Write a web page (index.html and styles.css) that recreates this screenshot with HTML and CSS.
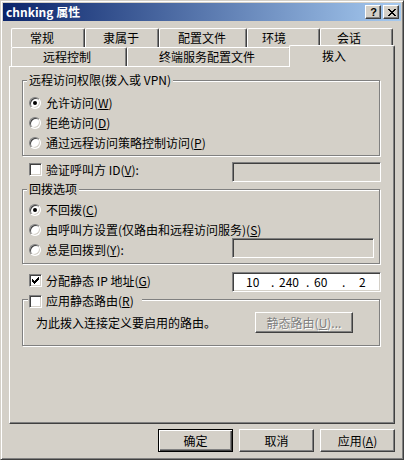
FILE: index.html
```html
<!DOCTYPE html>
<html lang="zh-CN">
<head>
<meta charset="utf-8">
<title>chnking 属性</title>
<link rel="stylesheet" href="styles.css">
</head>
<body>
<div class="window">
  <div class="titlebar">
    <span class="title">chnking 属性</span>
    <div class="tbtns">
      <span class="tbtn help">?</span>
      <span class="tbtn close">
        <svg width="8" height="7" viewBox="0 0 8 7" shape-rendering="crispEdges"><path d="M0 0h2v1h-2z M6 0h2v1h-2z M1 1h2v1h-2z M5 1h2v1h-2z M2 2h4v1h-4z M3 3h2v1h-2z M2 4h4v1h-4z M1 5h2v1h-2z M5 5h2v1h-2z M0 6h2v1h-2z M6 6h2v1h-2z" fill="#000"/></svg>
      </span>
    </div>
  </div>

  <div class="tabs">
    <div class="tabrow row1">
      <div class="tab t1">常规</div>
      <div class="tab t2">隶属于</div>
      <div class="tab t3">配置文件</div>
      <div class="tab t4">环境</div>
      <div class="tab t5">会话</div>
    </div>
    <div class="tabrow row2">
      <div class="tab t6">远程控制</div>
      <div class="tab t7">终端服务配置文件</div>
      <div class="tab t8 sel">拨入</div>
    </div>
  </div>

  <div class="panel">
    <div class="group g1">
      <div class="glabel">远程访问权限(拨入或 VPN)</div>
      <div class="opts o1">
        <div class="opt"><span class="radio on"></span><span>允许访问(<u>W</u>)</span></div>
        <div class="opt"><span class="radio"></span><span>拒绝访问(<u>D</u>)</span></div>
        <div class="opt"><span class="radio"></span><span>通过远程访问策略控制访问(<u>P</u>)</span></div>
      </div>
    </div>

    <div class="line l-verify">
      <div class="cl"><span class="check"></span><span>验证呼叫方 ID(<u>V</u>):</span></div>
      <div class="field"></div>
    </div>

    <div class="group g2">
      <div class="glabel">回拨选项</div>
      <div class="opts o2">
        <div class="opt"><span class="radio on"></span><span>不回拨(<u>C</u>)</span></div>
        <div class="opt"><span class="radio"></span><span>由呼叫方设置(仅路由和远程访问服务)(<u>S</u>)</span></div>
        <div class="opt withfield"><span class="radio"></span><span>总是回拨到(<u>Y</u>):</span><div class="field short"></div></div>
      </div>
    </div>

    <div class="line l-ip">
      <div class="cl"><span class="check">
        <svg width="7" height="7" viewBox="0 0 7 7" shape-rendering="crispEdges"><path d="M0 2h1v3h-1z M1 3h1v3h-1z M2 4h1v3h-1z M3 3h1v3h-1z M4 2h1v3h-1z M5 1h1v3h-1z M6 0h1v3h-1z" fill="#000"/></svg>
      </span><span>分配静态 IP 地址(<u>G</u>)</span></div>
      <div class="field ip"><span>10</span><span>.</span><span>240</span><span>.</span><span>60</span><span>.</span><span>2</span></div>
    </div>

    <div class="group g3">
      <div class="glabel chk"><span class="check"></span><span>应用静态路由(<u>R</u>)</span></div>
      <div class="g3row">
        <span class="g3text">为此拨入连接定义要启用的路由。</span>
        <span class="btn disabled routes">静态路由(<u>U</u>)...</span>
      </div>
    </div>
  </div>

  <div class="buttons">
    <span class="btn def">确定</span>
    <span class="btn">取消</span>
    <span class="btn">应用(<u>A</u>)</span>
  </div>
</div>
</body>
</html>
```

FILE: styles.css
```css
* { box-sizing: border-box; }

body {
  margin: 0;
  font-family: "Noto Sans CJK SC", sans-serif;
  font-size: 12px;
  line-height: 14px;
  color: #000;
  background: #d4d0c8;
}

u { text-decoration: underline; text-underline-offset: 1px; }

.window {
  width: 404px;
  height: 460px;
  background: #d4d0c8;
  border: 1px solid;
  border-color: #d4d0c8 #404040 #404040 #d4d0c8;
  box-shadow: inset 1px 1px #fff, inset -1px -1px #808080;
  padding: 2px;
  display: flex;
  flex-direction: column;
}

/* title bar */
.titlebar {
  height: 18px;
  flex: none;
  background: linear-gradient(to right, #0a246a, #a6caf0);
  display: flex;
  align-items: center;
  padding-left: 3px;
}
.title {
  flex: 1;
  color: #fff;
  font-weight: bold;
  font-size: 12px;
  line-height: 14px;
}
.tbtns { display: flex; gap: 2px; margin-right: 2px; }
.tbtn {
  width: 16px;
  height: 14px;
  background: #d4d0c8;
  border: 1px solid;
  border-color: #fff #404040 #404040 #fff;
  box-shadow: inset -1px -1px #808080;
  display: flex;
  align-items: center;
  justify-content: center;
}
.help {
  font: bold 11px/12px "Liberation Sans", sans-serif;
  padding-left: 1px;
}
.close svg { display: block; margin-left: 1px; }

/* tabs */
.tabs { margin: 7px 0 0 8px; flex: none; }
.tabrow { display: flex; height: 19px; }
.row2 { align-items: flex-end; }
.tab {
  flex: none;
  height: 19px;
  background: #d4d0c8;
  border-top: 1px solid #fff;
  border-left: 1px solid #fff;
  border-right: 1px solid #404040;
  box-shadow: inset -1px 0 #808080;
  border-radius: 2px 2px 0 0;
  line-height: 18px;
  white-space: nowrap;
}
.row2 .tab { line-height: 17px; }
.tab.sel {
  height: 22px;
  margin-left: -2px;
  margin-bottom: -1px;
  position: relative;
  z-index: 1;
  line-height: 19px;
}
.t1 { width: 74px; padding-left: 18px; }
.t2 { width: 74px; padding-left: 17px; }
.t3 { width: 88px; padding-left: 18px; }
.t4 { width: 73px; padding-left: 14px; }
.t5 { width: 73px; padding-left: 16px; }
.t6 { width: 116px; padding-left: 31px; }
.t7 { width: 164px; padding-left: 31px; }
.t8 { width: 106px; padding-left: 32px; }

/* panel */
.panel {
  flex: none;
  margin-left: 6px;
  width: 386px;
  height: 358px;
  border: 1px solid;
  border-color: #fff #404040 #404040 #fff;
  box-shadow: inset -1px -1px #808080;
  padding: 13px 0 0 12px;
}

.group {
  width: 358px;
  border: 1px solid #808080;
  box-shadow: inset 1px 1px #fff, 1px 1px #fff;
}
.g1 { height: 76px; }
.g2 { height: 75px; margin-top: 7px; }
.g3 { height: 47px; margin-top: 7px; }

.glabel {
  width: fit-content;
  background: #d4d0c8;
  margin: -8px 0 0 4px;
  padding: 0 2px;
  height: 14px;
  line-height: 14px;
  white-space: nowrap;
}
.glabel.chk {
  display: flex;
  align-items: center;
  gap: 4px;
  margin: -6px 0 0 5px;
  padding: 0 8px 0 1px;
}

.o1 { margin-top: 6px; }
.o2 { margin-top: 4px; }
.opt {
  display: flex;
  align-items: center;
  height: 20px;
  padding-left: 6px;
  gap: 5px;
  white-space: nowrap;
}
.opt.withfield { padding-right: 5px; }
.opt.withfield .field { margin-left: auto; margin-top: -4px; }

.radio {
  flex: none;
  position: relative;
  width: 12px;
  height: 12px;
  border-radius: 50%;
  background: #fff;
  border: 1px solid;
  border-color: #808080 #fff #fff #808080;
  box-shadow: inset 1px 1px #404040, inset -1px -1px #d4d0c8;
}
.radio.on::after {
  content: "";
  position: absolute;
  left: 3px;
  top: 3px;
  width: 4px;
  height: 4px;
  border-radius: 50%;
  background: #000;
}

.check {
  flex: none;
  width: 13px;
  height: 13px;
  background: #fff;
  border: 1px solid;
  border-color: #808080 #fff #fff #808080;
  box-shadow: inset 1px 1px #404040, inset -1px -1px #d4d0c8;
  display: flex;
  align-items: center;
  justify-content: center;
}
.check svg { display: block; }

.line { display: flex; align-items: flex-start; height: 20px; }
.l-verify { margin-top: 6px; }
.l-ip { margin-top: 8px; }
.cl {
  width: 210px;
  height: 13px;
  display: flex;
  align-items: center;
  gap: 4px;
  padding-left: 7px;
  white-space: nowrap;
}
.l-verify .cl { margin-top: 1px; }
.l-ip .cl { margin-top: 2px; }

.field {
  flex: none;
  width: 149px;
  height: 20px;
  background: #d4d0c8;
  border: 1px solid;
  border-color: #808080 #fff #fff #808080;
  box-shadow: inset 1px 1px #404040, inset -1px -1px #d4d0c8;
}
.field.short { width: 142px; }
.field.ip {
  background: #fff;
  display: grid;
  grid-template-columns: 25px 8px 27px 8px 28px 17px auto;
  padding-left: 13px;
  align-items: center;
  line-height: 16px;
}

.g3row {
  display: flex;
  align-items: center;
  height: 21px;
  margin-top: 4px;
  padding-left: 13px;
}
.g3text { width: 219px; white-space: nowrap; }

/* buttons */
.btn {
  flex: none;
  width: 75px;
  height: 23px;
  background: #d4d0c8;
  border: 1px solid;
  border-color: #fff #404040 #404040 #fff;
  box-shadow: inset -1px -1px #808080;
  display: flex;
  align-items: center;
  justify-content: center;
  white-space: nowrap;
}
.btn.def {
  border-color: #000;
  box-shadow: inset 1px 1px #fff, inset -1px -1px #404040, inset -2px -2px #808080;
}
.btn.routes { width: 98px; height: 21px; }
.btn.disabled { color: #808080; text-shadow: 1px 1px #fff; }

.buttons {
  flex: none;
  display: flex;
  justify-content: flex-end;
  gap: 6px;
  margin-top: 5px;
  padding-right: 6px;
}
```
